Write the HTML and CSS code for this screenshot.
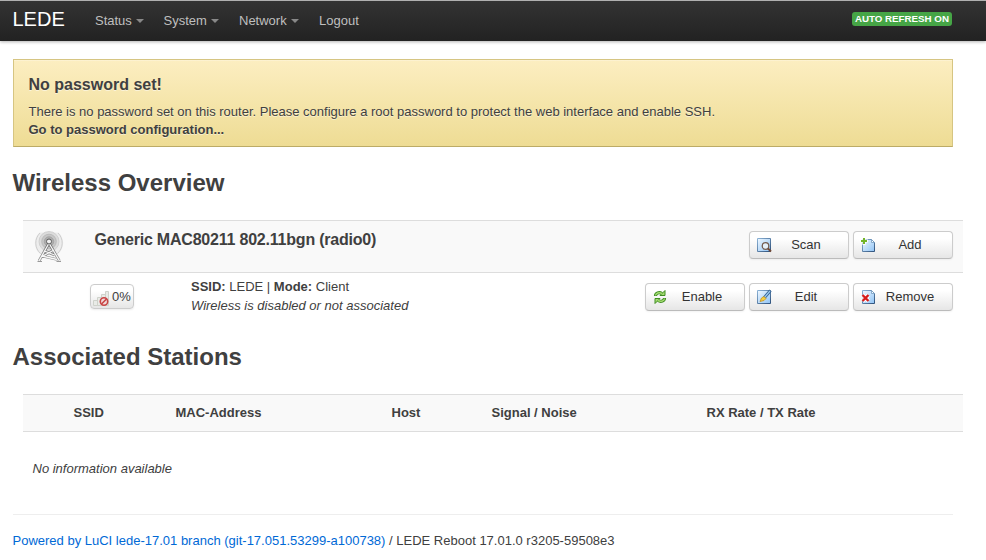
FILE: index.html
```html
<!DOCTYPE html>
<html lang="en">
<head>
<meta charset="utf-8">
<title>LEDE - Wireless Overview</title>
<link rel="stylesheet" href="styles.css">
</head>
<body>
<svg width="0" height="0" class="defs" aria-hidden="true">
  <defs>
    <linearGradient id="paper" x1="0" y1="0" x2="1" y2="1">
      <stop offset="0" stop-color="#f0f8ff"/><stop offset="1" stop-color="#8fc3f5"/>
    </linearGradient>
    <linearGradient id="edge" x1="0" y1="0" x2="1" y2="1">
      <stop offset="0" stop-color="#8bb2d6"/><stop offset="1" stop-color="#2f527c"/>
    </linearGradient>
    <linearGradient id="mast" x1="0" y1="0" x2="0" y2="1">
      <stop offset="0" stop-color="#666"/><stop offset="1" stop-color="#999"/>
    </linearGradient>
  </defs>
</svg>
<header class="topbar">
  <a class="brand">LEDE</a>
  <nav class="nav">
    <a class="menu status">Status</a>
    <a class="menu system">System</a>
    <a class="menu network">Network</a>
    <a class="logout">Logout</a>
  </nav>
  <span class="label">AUTO REFRESH ON</span>
</header>
<main>
  <div class="alert">
    <h4>No password set!</h4>
    <p>There is no password set on this router. Please configure a root password to protect the web interface and enable SSH.</p>
    <a>Go to password configuration...</a>
  </div>
  <h2>Wireless Overview</h2>
  <section class="table">
    <div class="device">
      <svg class="radio" width="32" height="32" viewBox="0 0 32 32" fill="none">
        <path d="M7 23A14.200 14.200 0 0 1 6.500 1.500h19A14.200 14.200 0 0 1 25 23z" fill="#ededed"/>
        <path d="M7.500 22.500A14 14 0 0 1 7 2M24.500 22.500A14 14 0 0 0 25 2" stroke="#cecece"/>
        <circle cx="16" cy="10.500" r="10" fill="#dcdcdc" stroke="#cacaca" stroke-width=".8"/>
        <circle cx="16" cy="10.500" r="7.300" fill="#c6c6c6" stroke="#b5b5b5" stroke-width=".8"/>
        <circle cx="16" cy="10.500" r="4.700" fill="#adadad" stroke="#a0a0a0" stroke-width=".8"/>
        <path d="M15.500 13 6 30M16.500 13l10 17M11.500 20l10 4M21 19 8 26M9 25l15 3.500" stroke="url(#mast)" stroke-width="2.700"/>
        <path d="M15.500 13 6 30M16.500 13l10 17M11.500 20l10 4M21 19 8 26M9 25l15 3.500" stroke="#f7f7f7" stroke-width="1.300"/>
        <path d="M4.500 30.500h4.500M23.500 30.500H28" stroke="#999"/>
        <circle cx="16" cy="10.500" r="2.500" fill="#eee" stroke="#5c5c5c"/>
      </svg>
      <h3>Generic MAC80211 802.11bgn (radio0)</h3>
      <div class="actions">
        <button><svg width="16" height="16" viewBox="0 0 16 16"><path d="M1.500 1.500h13v13h-13z" fill="url(#paper)" stroke="url(#edge)"/><circle cx="9.500" cy="9" r="3.300" fill="#e4f0fa" stroke="#745c50" stroke-width="1.300"/><path d="m12 11.500 3 3" stroke="#704836" stroke-width="2"/></svg><span>Scan</span></button>
        <button><svg width="16" height="16" viewBox="0 0 16 16"><path d="M2.500 2.500h9l3 3v9h-12z" fill="url(#paper)" stroke="url(#edge)"/><path d="M11.500 2.500v3h3z" fill="#fff" stroke="#7099bf" stroke-width=".8"/><path d="M2.500 0h3v2.500H8v3H5.500V8h-3V5.500H0v-3h2.500z" fill="#fff"/><path d="M3 1h2v2h2v2H5v2H3V5H1V3h2z" fill="#74b52b"/></svg><span>Add</span></button>
      </div>
    </div>
    <div class="network-row">
      <span class="badge"><svg width="16" height="16" viewBox="0 0 16 16"><g fill="#e9ebe7" stroke="#cfd2cb"><path d="M.5 10.500h4v5h-4zM4.500 7.500h4v8h-4zM8.500 4.500h4v11h-4zM12.500 1.500h3v14h-3z"/></g><circle cx="11" cy="11.500" r="3.700" fill="#f0dada" stroke="#c84545" stroke-width="1.600"/><path d="m8.500 9 5 5" stroke="#c84545" stroke-width="0"/><path d="m8.500 14 5-5" stroke="#c84545" stroke-width="1.600"/></svg><span>0%</span></span>
      <div class="info"><b>SSID:</b> LEDE | <b>Mode:</b> Client<br><em>Wireless is disabled or not associated</em></div>
      <div class="actions">
        <button><svg width="16" height="16" viewBox="0 0 16 16" fill="none"><path d="M3.500 7C3.500 4 7 2.700 10 4.500M12.500 9C12.500 12 9 13.300 6 11.500" stroke="#3f8c22" stroke-width="3.200"/><path d="M8 6.500h5V1.500zM8 9.500H3v5z" fill="#a4dc70" stroke="#3f8c22" stroke-linejoin="round"/><path d="M3.500 6.500C3.800 4 7 3 10 4.500M12.500 9.500C12.200 12 9 13 6 11.500" stroke="#a4dc70" stroke-width="1.400"/></svg><span>Enable</span></button>
        <button><svg width="16" height="16" viewBox="0 0 16 16"><path d="M1.500 1.500h13v13h-13z" fill="url(#paper)" stroke="url(#edge)"/><path d="M14.500 1.500 8 9" stroke="#315f91" stroke-width="3"/><path d="M14 2 8.500 8.500" stroke="#9bcbef" stroke-width="1.200"/><path d="M4 12.500 5.500 9 8 7.500l2 2-2 2z" fill="#f6cf3e" stroke="#c5921e" stroke-width=".8"/></svg><span>Edit</span></button>
        <button><svg width="16" height="16" viewBox="0 0 16 16"><path d="M2.500 1.500h9l3 3v10h-12z" fill="url(#paper)" stroke="url(#edge)"/><path d="M11.500 1.500v3h3z" fill="#fff" stroke="#7099bf" stroke-width=".8"/><path d="m2.500 6 6 6m0-6-6 6" stroke="#fff" stroke-width="4"/><path d="m2.500 6 6 6m0-6-6 6" stroke="#d51c1c" stroke-width="2.400"/></svg><span>Remove</span></button>
      </div>
    </div>
  </section>
  <h2 class="stations-title">Associated Stations</h2>
  <section class="table">
    <div class="thead"><span>SSID</span><span>MAC-Address</span><span>Host</span><span>Signal / Noise</span><span>RX Rate / TX Rate</span></div>
    <p class="empty"><em>No information available</em></p>
  </section>
  <footer><a>Powered by LuCI lede-17.01 branch (git-17.051.53299-a100738)</a> / LEDE Reboot 17.01.0 r3205-59508e3</footer>
</main>
</body>
</html>
```
FILE: styles.css
```css
* { box-sizing: border-box; }
body { margin: 0; font: 13px/18px "Liberation Sans", Arial, sans-serif; color: #404040; background: #fff; overflow: hidden; }
h2, h3, h4, p { margin: 0; }
.defs { display: block; height: 0; }
.topbar { display: flex; align-items: center; height: 41px; padding: 0 34px 0 12.500px; border-top: 1px solid #b0b0b0; background: linear-gradient(#333, #222); box-shadow: 0 1px 3px rgba(0,0,0,.3); }
.brand { width: 82.500px; font-size: 20px; color: #fff; line-height: 24px; margin-top: -4px; }
.nav { display: flex; flex: 1; color: #bfbfbf; }
.menu { display: flex; align-items: center; }
.status { width: 68.500px; }
.system { width: 75.500px; }
.network { width: 80px; }
.menu::after { content: ""; margin: 0 0 0 4px; border: 4px solid transparent; border-top-color: #888; border-bottom: 0; }
.label { background: #46a546; color: #fff; font-size: 9.750px; font-weight: bold; line-height: 14px; height: 14px; padding: 0 3px; border-radius: 3px; margin-top: -5px; white-space: nowrap; }
main { padding: 18px 33px 0 12.500px; }
.alert { height: 88px; padding: 16px 15px 0; border: 1px solid #d6c582; border-bottom-color: #bcab66; background: linear-gradient(#fceec1, #eedc94); box-shadow: inset 0 1px 0 rgba(255,255,255,.25); text-shadow: 0 1px 0 rgba(255,255,255,.5); }
.alert h4 { font-size: 16px; line-height: 18px; margin-bottom: 9px; }
.alert a { font-weight: bold; }
h2 { font-size: 24px; line-height: 36px; margin: 18px 0 19px; }
.table { width: 940px; margin-left: 10.500px; }
.device { display: flex; height: 53px; padding: 10px; background: #f9f9f9; border: solid #ddd; border-width: 1px 0; }
.radio { margin-right: 29.500px; }
h3 { font-size: 16px; line-height: 18px; letter-spacing: -.21px; }
.actions { display: flex; gap: 4px; margin-left: auto; }
button { display: flex; align-items: center; width: 100px; height: 28px; padding: 0 6px; border: 1px solid #ccc; border-bottom-color: #bbb; border-radius: 4px; background: linear-gradient(#fff, #fff 25%, #e6e6e6); box-shadow: inset 0 1px 0 rgba(255,255,255,.2), 0 1px 2px rgba(0,0,0,.05); font: 13px/18px "Liberation Sans", Arial, sans-serif; color: #333; }
button span { flex: 1; text-align: center; padding-right: 2px; }
.network-row { display: flex; height: 64px; padding: 10px 10px 0 67px; margin-bottom: 2px; }
.badge { display: flex; align-items: flex-end; gap: 3px; width: 44px; height: 25px; padding: 0 2px 2px; margin: 1px 57px 0 0; border: 1px solid #ccc; border-radius: 4px; background: linear-gradient(#fff, #fff 25%, #e6e6e6); box-shadow: 0 1px 2px rgba(0,0,0,.08); }
.network-row .info { line-height: 19px; margin-top: -6px; }
.stations-title { margin: 0 0 19px; }
.thead { display: grid; grid-template-columns: 102px 216px 100px 215px 1fr; height: 38px; padding-left: 50.500px; align-items: center; background: #f9f9f9; border: solid #ddd; border-width: 1px 0; font-weight: bold; }
.empty { padding: 28px 9.500px 36px; }
footer { border-top: 1px solid #eee; padding-top: 17px; }
footer a { color: #0069d6; }
```
